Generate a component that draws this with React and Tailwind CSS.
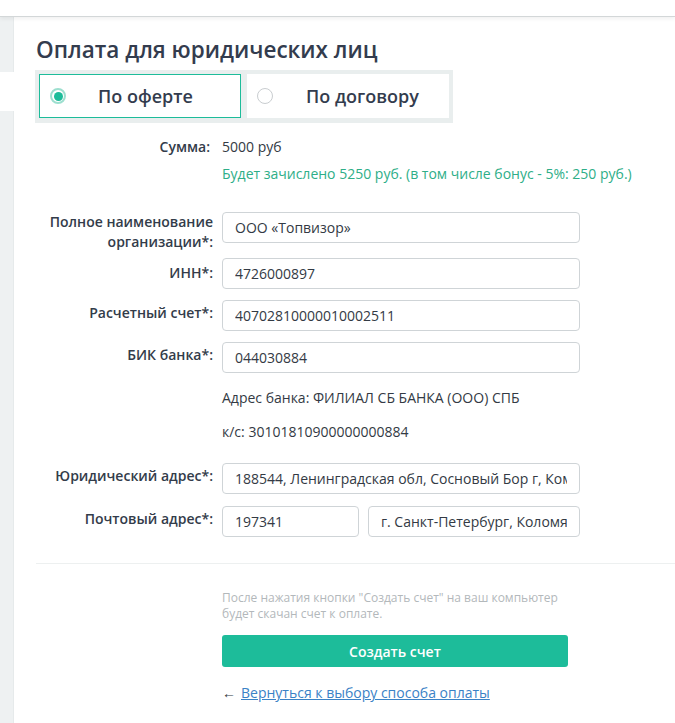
export default function App() {
  const font = { fontFamily: '"Open Sans", "Noto Sans", sans-serif' };
  const inputCls =
    "h-[31px] border border-[#cfd4d7] rounded-[4px] bg-white px-[12px] text-[14px] text-[#333a44] outline-none";
  const labelCls =
    "w-[177px] shrink-0 text-right text-[14px] leading-[20px] font-semibold text-[#333c4a]";
  return (
    <div className="w-[675px] h-[723px] bg-white relative overflow-hidden" style={font}>
      {/* top bar */}
      <div className="h-[17px] bg-white border-b border-[#d3d7d8] shadow-[0_2px_4px_rgba(0,0,0,0.06)] relative z-10" />
      <div className="flex">
        {/* sidebar strip */}
        <div className="w-[14px] shrink-0 flex flex-col">
          <div className="h-[55px] bg-[#eef1f2] border-r border-[#e6eaeb]" />
          <div className="h-[39px] bg-white" />
          <div className="h-[620px] bg-[#eef1f2] border-r border-[#e6eaeb]" />
        </div>
        {/* main */}
        <div className="flex-1 pt-[18px]">
          <div className="pl-[22px]">
            <h1 className="text-[22.5px] leading-[30px] font-semibold text-[#333c4e]">
              Оплата для юридических лиц
            </h1>
            <div className="mt-[5px] w-[418px] h-[53px] bg-[#e9eeee] p-[4px] flex gap-[6px] -ml-[1px]">
              <div className="w-[202px] h-[44px] bg-white border border-[#1dbc9a] flex items-center">
                <span className="ml-[10px] w-[16px] h-[16px] rounded-full border-2 border-[#9ddfcf] flex items-center justify-center">
                  <span className="w-[9px] h-[9px] rounded-full bg-[#1dbc9a]" />
                </span>
                <span className="ml-[32px] text-[18px] font-semibold text-[#333c4e]">По оферте</span>
              </div>
              <div className="w-[202px] h-[44px] bg-white flex items-center">
                <span className="ml-[10px] w-[16px] h-[16px] rounded-full border border-[#c9cdd0]" />
                <span className="ml-[33px] text-[18px] font-semibold text-[#333c4e]">По договору</span>
              </div>
            </div>

            <div className="mt-[14px] flex gap-[9px] items-start">
              <div className={labelCls + " pr-[3px]"}>Сумма:</div>
              <div className="text-[14px] leading-[20px] text-[#333a44]">5000 руб</div>
            </div>
            <div className="mt-[7px] pl-[186px] text-[14px] leading-[20px] text-[#2eae88]">
              Будет зачислено 5250 руб. (в том числе бонус - 5%: 250 руб.)
            </div>

            <div className="mt-[28px] flex gap-[9px] items-start">
              <div className={labelCls}>
                Полное наименование
                <br />
                организации*:
              </div>
              <input readOnly className={inputCls + " w-[358px]"} value="ООО «Топвизор»" />
            </div>
            <div className="mt-[6px] flex gap-[9px] items-start">
              <div className={labelCls + " pt-[5px]"}>ИНН*:</div>
              <input readOnly className={inputCls + " w-[358px]"} value="4726000897" />
            </div>
            <div className="mt-[11px] flex gap-[9px] items-start">
              <div className={labelCls + " pt-[3px]"}>Расчетный счет*:</div>
              <input readOnly className={inputCls + " w-[358px]"} value="40702810000010002511" />
            </div>
            <div className="mt-[11px] flex gap-[9px] items-start">
              <div className={labelCls + " pt-[3px]"}>БИК банка*:</div>
              <input readOnly className={inputCls + " w-[358px]"} value="044030884" />
            </div>
            <div className="mt-[15px] pl-[186px] text-[14px] leading-[20px] text-[#333a44]">
              Адрес банка: ФИЛИАЛ СБ БАНКА (ООО) СПБ
            </div>
            <div className="mt-[14px] pl-[186px] text-[14px] leading-[20px] text-[#333a44]">
              к/с: 30101810900000000884
            </div>
            <div className="mt-[21px] flex gap-[9px] items-start">
              <div className={labelCls + " pt-[3px]"}>Юридический адрес*:</div>
              <input
                readOnly
                className={inputCls + " w-[358px]"}
                value="188544, Ленинградская обл, Сосновый Бор г, Комсомольская ул"
              />
            </div>
            <div className="mt-[12px] flex gap-[9px] items-start">
              <div className={labelCls + " pt-[3px]"}>Почтовый адрес*:</div>
              <div className="flex gap-[9px]">
                <input readOnly className={inputCls + " w-[137px]"} value="197341" />
                <input readOnly className={inputCls + " w-[212px]"} value="г. Санкт-Петербург, Коломяжский пр." />
              </div>
            </div>
          </div>

          <div className="mt-[26px] ml-[22px] border-t border-[#edf0f0]" />

          <div className="pl-[208px]">
            <div className="mt-[26px] text-[12px] leading-[16px] text-[#b3b8bb]">
              После нажатия кнопки "Создать счет" на ваш компьютер
              <br />
              будет скачан счет к оплате.
            </div>
            <button className="mt-[13px] w-[346px] h-[32px] rounded-[3px] bg-[#1dbc9a] text-white text-[14px] font-semibold">
              Создать счет
            </button>
            <div className="mt-[16px] text-[14px] leading-[20px] text-[#333a44]">
              <span className="mr-[5px]">←</span>
              <a className="text-[#3a82c6] underline">Вернуться к выбору способа оплаты</a>
            </div>
          </div>
        </div>
      </div>
    </div>
  );
}
